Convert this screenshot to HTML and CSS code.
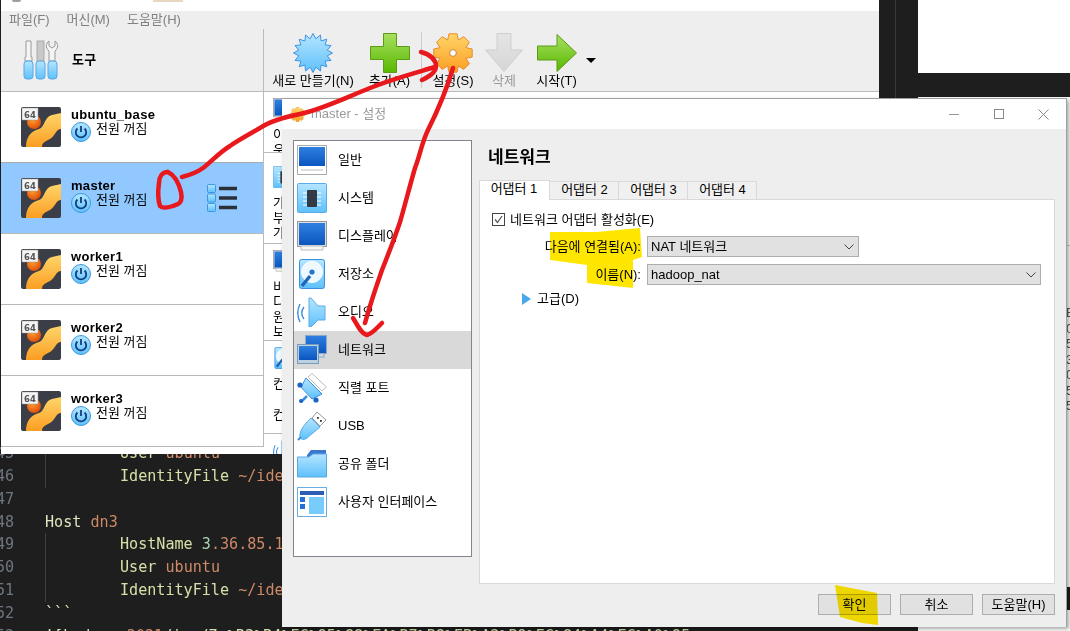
FILE: index.html

```html
<!DOCTYPE html>
<html lang="ko">
<head>
  <meta charset="UTF-8" />
  <title>master - 설정</title>
  <link rel="stylesheet" href="styles.css">
</head>
<body>
  <svg class="defs" width="0" height="0">
    <defs>
      <linearGradient id="gBlue" x1="0" y1="0" x2="0" y2="1"><stop offset="0" stop-color="#2f80e0"/><stop offset="1" stop-color="#0a55c0"/></linearGradient>
      <linearGradient id="gSky" x1="0" y1="0" x2="0" y2="1"><stop offset="0" stop-color="#b5e6ff"/><stop offset="1" stop-color="#5fc0fb"/></linearGradient>
      <linearGradient id="gGreen" x1="0" y1="0" x2="0" y2="1"><stop offset="0" stop-color="#a8e060"/><stop offset="1" stop-color="#58b800"/></linearGradient>
      <linearGradient id="gOrange" x1="0" y1="0" x2="0" y2="1"><stop offset="0" stop-color="#ffd56a"/><stop offset="1" stop-color="#fb9e22"/></linearGradient>
      <linearGradient id="gGray" x1="0" y1="0" x2="0" y2="1"><stop offset="0" stop-color="#e4e4e4"/><stop offset="1" stop-color="#d6d6d6"/></linearGradient>
      <radialGradient id="gBall" cx=".4" cy=".35" r=".7"><stop offset="0" stop-color="#ffa030"/><stop offset="1" stop-color="#dc4a08"/></radialGradient>

      <symbol id="i-vm" viewBox="0 0 40 40">
        <rect width="40" height="40" rx="2" fill="#3b3e46"/>
        <path d="M5 40C5 30 10 24 18 22C24 20 23 10 31 8L40 6V22C35 22 35 28 29 32C23 35 21 36 21 40Z" fill="url(#gOrange)"/>
        <circle cx="13" cy="15" r="7" fill="url(#gBall)"/>
        <rect x="1" y="1" width="16" height="12" fill="#f4f4f4" stroke="#999" stroke-width=".5"/>
        <text x="9" y="10.5" text-anchor="middle" font-family="DejaVu Sans" font-size="8.5" font-weight="bold" fill="#555">64</text>
      </symbol>
      <symbol id="i-power" viewBox="0 0 20 20">
        <circle cx="10" cy="10" r="9.5" fill="url(#gSky)" stroke="#3b98dc"/>
        <path d="M6.4 6.5A5.2 5.2 0 1 0 13.6 6.5" fill="none" stroke="#0f3f80" stroke-width="1.8"/>
        <path d="M10 4V10" stroke="#0f3f80" stroke-width="1.8"/>
      </symbol>
      <symbol id="i-tools" viewBox="0 0 36 40">
        <path d="M3 1H8V17H9V21H2V17H3Z" fill="#f4f4f4" stroke="#999"/>
        <rect x="14" y="1" width="7" height="20" fill="#c8c8c8" stroke="#aaa"/>
        <path d="M26 1V6L29 8L32 6V1C35 3 36 8 32 11V21H26V11C22 8 23 3 26 1Z" fill="#f4f4f4" stroke="#999"/>
        <rect x="1" y="21" width="9" height="18" rx="3" fill="url(#gSky)" stroke="#56a8e6"/>
        <rect x="13" y="21" width="9" height="18" rx="3" fill="url(#gSky)" stroke="#56a8e6"/>
        <rect x="25" y="21" width="9" height="18" rx="3" fill="url(#gSky)" stroke="#56a8e6"/>
      </symbol>
      <symbol id="i-list" viewBox="0 0 30 28">
        <rect x=".5" y=".5" width="8" height="8" rx="1" fill="url(#gSky)" stroke="#3b98dc"/>
        <rect x=".5" y="10" width="8" height="8" rx="1" fill="url(#gSky)" stroke="#3b98dc"/>
        <rect x=".5" y="19.5" width="8" height="8" rx="1" fill="url(#gSky)" stroke="#3b98dc"/>
        <path d="M12 4.5H30M12 14H30M12 23.5H30" stroke="#2b3038" stroke-width="3.4"/>
      </symbol>
      <symbol id="i-new" viewBox="0 0 40 40">
        <polygon points="20,.5 22.83,5.78 27.46,1.98 28.06,7.94 33.79,6.21 32.06,11.94 38.02,12.54 34.22,17.17 39.5,20 34.22,22.83 38.02,27.46 32.06,28.06 33.79,33.79 28.06,32.06 27.46,38.02 22.83,34.22 20,39.5 17.17,34.22 12.54,38.02 11.94,32.06 6.21,33.79 7.94,28.06 1.98,27.46 5.78,22.83 .5,20 5.78,17.17 1.98,12.54 7.94,11.94 6.21,6.21 11.94,7.94 12.54,1.98 17.17,5.78" fill="url(#gSky)" stroke="#3f93e6"/>
      </symbol>
      <symbol id="i-add" viewBox="0 0 40 40">
        <path d="M13.5 .5H26.5V13.5H39.5V26.5H26.5V39.5H13.5V26.5H.5V13.5H13.5Z" fill="url(#gGreen)" stroke="#5c9a18"/>
      </symbol>
      <symbol id="i-gear" viewBox="0 0 40 40">
        <path d="M16 .8H24L25.36 7.07L30.75 3.6L36.4 9.25L32.93 14.64L39.2 16V24L32.93 25.36L36.4 30.75L30.75 36.4L25.36 32.93L24 39.2H16L14.64 32.93L9.25 36.4L3.6 30.75L7.07 25.36L.8 24V16L7.07 14.64L3.6 9.25L9.25 3.6L14.64 7.07Z" fill="url(#gOrange)" stroke="#e88a28"/>
        <circle cx="20" cy="20" r="3.4" fill="#fff" stroke="#c9822c"/>
      </symbol>
      <symbol id="i-del" viewBox="0 0 40 40">
        <path d="M13 .5H27V17H38.5L20 38.5L1.5 17H13Z" fill="url(#gGray)" stroke="#cfcfcf"/>
      </symbol>
      <symbol id="i-start" viewBox="0 0 40 40">
        <path d="M.5 13H20V1.5L39.5 20L20 38.5V27H.5Z" fill="url(#gGreen)" stroke="#5c9a18"/>
      </symbol>

      <symbol id="s-general" viewBox="0 0 30 30">
        <rect x=".5" y=".5" width="29" height="29" fill="#fff" stroke="#aaa"/>
        <rect x="2" y="2" width="26" height="19" fill="url(#gBlue)"/>
        <path d="M4 25H26" stroke="#bbb"/>
      </symbol>
      <symbol id="s-system" viewBox="0 0 30 30">
        <rect x=".5" y=".5" width="29" height="29" rx="1" fill="url(#gSky)" stroke="#58ace8"/>
        <path d="M6 10H24M6 14H24M6 18H24M6 22H24" stroke="#fff"/>
        <rect x="10" y="7" width="10" height="17" rx="1" fill="#333a46"/>
      </symbol>
      <symbol id="s-display" viewBox="0 0 30 30">
        <rect x=".5" y=".5" width="29" height="25" fill="#ddd" stroke="#999"/>
        <rect x="2" y="2" width="26" height="22" fill="url(#gBlue)"/>
        <path d="M4 25H26V29H4Z" fill="#f5f5f5" stroke="#bbb"/>
      </symbol>
      <symbol id="s-storage" viewBox="0 0 30 30">
        <rect x="2.5" y=".5" width="25" height="29" rx="2" fill="url(#gSky)" stroke="#3b8edc"/>
        <circle cx="15" cy="13" r="10.5" fill="#eef8ff" stroke="#fff"/>
        <circle cx="15" cy="13" r="2.6" fill="#2474cc"/>
        <path d="M5 27L13 17" stroke="#1f66b8" stroke-width="3.4"/>
      </symbol>
      <symbol id="s-audio" viewBox="0 0 30 30">
        <path d="M14 1L21 9H28V23H21L14 30H12V1Z" fill="url(#gSky)" stroke="#58ace8"/>
        <path d="M7 10C4 14 4 18 7 22M3 7C0 13 0 19 3 25" fill="none" stroke="#3b8edc" stroke-width="1.4"/>
      </symbol>
      <symbol id="s-network" viewBox="0 0 30 30">
        <rect x="8.5" y=".5" width="21" height="18" fill="url(#gBlue)" stroke="#8fa9c4"/>
        <path d="M27 19V22H20" fill="none" stroke="#a8c0d8" stroke-width="2"/>
        <rect x=".5" y="9.5" width="21" height="19" fill="#bcd0e4" stroke="#7a9ab8"/>
        <rect x="2" y="11" width="18" height="14" fill="url(#gBlue)"/>
      </symbol>
      <symbol id="s-serial" viewBox="0 0 30 30">
        <path d="M15 .5L29.5 14L25 18L11 4Z" fill="#fff" stroke="#bbb"/>
        <path d="M9 5L25 21L15 26L4 14Z" fill="url(#gSky)" stroke="#3b8edc"/>
        <path d="M10 23L4 29" stroke="#3b8edc" stroke-width="2.5"/>
        <circle cx="3" cy="12" r="2.6" fill="#1a66c8"/>
        <circle cx="19" cy="27" r="2.6" fill="#1a66c8"/>
        <circle cx="4" cy="28" r="2" fill="#1a66c8"/>
      </symbol>
      <symbol id="s-usb" viewBox="0 0 30 30">
        <path d="M20 1L29 9L23 15L15 7Z" fill="#fff" stroke="#999"/>
        <rect x="20" y="6" width="1.8" height="1.8" fill="#333"/>
        <rect x="23" y="9" width="1.8" height="1.8" fill="#333"/>
        <path d="M14 7L23 16L10 27C6 30 2 28 3 23C4 17 9 12 14 7Z" fill="url(#gSky)" stroke="#58ace8"/>
        <path d="M4 26L1 29" stroke="#3b8edc" stroke-width="2"/>
      </symbol>
      <symbol id="s-folder" viewBox="0 0 30 30">
        <path d="M10 6L14 1H29V8H10Z" fill="#3a78d0"/>
        <path d="M.5 8H12L16 5H29.5V28H.5Z" fill="url(#gSky)" stroke="#5aa8e4"/>
      </symbol>
      <symbol id="s-ui" viewBox="0 0 30 30">
        <rect x=".5" y=".5" width="29" height="29" fill="#ffffff" stroke="#6aaee8"/>
        <rect x="3" y="4" width="24" height="4" fill="#2c5fb4"/>
        <rect x="3" y="10" width="5" height="5" fill="#2470d8"/>
        <rect x="3" y="17" width="5" height="5" fill="#2470d8"/>
        <rect x="12" y="10" width="15" height="17" fill="#78ccfc"/>
      </symbol>
    </defs>
  </svg>

  <!-- editor behind the windows -->
  <div class="editor">
    <div class="line"><span class="num">45</span><span class="tab"></span><span class="kw">User</span> <span class="val">ubuntu</span></div>
    <div class="line"><span class="num">46</span><span class="tab"></span><span class="kw">IdentityFile</span> <span class="val">~/ide</span></div>
    <div class="line"><span class="num">47</span></div>
    <div class="line"><span class="num">48</span><span class="kw host">Host</span> <span class="val">dn3</span></div>
    <div class="line"><span class="num">49</span><span class="tab"></span><span class="kw">HostName</span> <span class="ip">3</span><span class="val">.36.85.1</span></div>
    <div class="line"><span class="num">50</span><span class="tab"></span><span class="kw">User</span> <span class="val">ubuntu</span></div>
    <div class="line"><span class="num">51</span><span class="tab"></span><span class="kw">IdentityFile</span> <span class="val">~/ide</span></div>
    <div class="line"><span class="num">52</span><span class="kw host">```</span></div>
    <div class="line"><span class="num">53</span><span class="kw host">![hadoop</span> <span class="val">2021</span><span class="kw">/img/7-%B3%B4%EC%95%88%EA%B7%B8%EB%A3%B9%EC%84%A4%EC%A0%95</span></div>
  </div>
  <div class="editor-rule"></div>
  <div class="white-top"></div>
  <div class="white-side">
    <span class="side-line"></span>
    <div class="side-nums">E<br>0<br>5<br>3<br>0<br>5<br>5</div>
    <span class="side-bar"></span>
  </div>

  <!-- main window -->
  <div class="vbox">
    <div class="vbox-title"><i class="bit-icon"></i><i class="bit-gear"></i></div>
    <div class="menu">
      <span>파일(F)</span><span>머신(M)</span><span>도움말(H)</span>
    </div>
    <div class="vbox-body">
      <div class="side">
        <div class="tools-row">
          <svg class="tools-icon"><use href="#i-tools"/></svg>
          <b>도구</b>
        </div>
        <div class="vm">
          <svg class="vm-icon"><use href="#i-vm"/></svg>
          <div class="vm-text"><b>ubuntu_base</b><div class="vm-state"><svg class="power"><use href="#i-power"/></svg>전원 꺼짐</div></div>
        </div>
        <div class="vm selected">
          <svg class="vm-icon"><use href="#i-vm"/></svg>
          <div class="vm-text"><b>master</b><div class="vm-state"><svg class="power"><use href="#i-power"/></svg>전원 꺼짐</div></div>
          <svg class="vm-list"><use href="#i-list"/></svg>
        </div>
        <div class="vm">
          <svg class="vm-icon"><use href="#i-vm"/></svg>
          <div class="vm-text"><b>worker1</b><div class="vm-state"><svg class="power"><use href="#i-power"/></svg>전원 꺼짐</div></div>
        </div>
        <div class="vm">
          <svg class="vm-icon"><use href="#i-vm"/></svg>
          <div class="vm-text"><b>worker2</b><div class="vm-state"><svg class="power"><use href="#i-power"/></svg>전원 꺼짐</div></div>
        </div>
        <div class="vm">
          <svg class="vm-icon"><use href="#i-vm"/></svg>
          <div class="vm-text"><b>worker3</b><div class="vm-state"><svg class="power"><use href="#i-power"/></svg>전원 꺼짐</div></div>
        </div>
      </div>
      <div class="pane">
        <div class="toolbar">
          <div class="tool t-new"><svg><use href="#i-new"/></svg><span>새로 만들기(N)</span></div>
          <div class="tool t-add"><svg><use href="#i-add"/></svg><span>추가(A)</span></div>
          <div class="tool-sep"></div>
          <div class="tool t-gear"><svg><use href="#i-gear"/></svg><span>설정(S)</span></div>
          <div class="tool t-del"><svg><use href="#i-del"/></svg><span class="off">삭제</span></div>
          <div class="tool t-start"><svg><use href="#i-start"/></svg><span>시작(T)</span></div>
          <div class="caret"></div>
        </div>
        <div class="details">
          <div class="sect s1"><svg><use href="#s-display"/></svg><p>이</p><p>운</p></div>
          <div class="sect s2"><svg><use href="#s-system"/></svg><p>가</p><p>부</p><p>가</p></div>
          <div class="sect s3"><svg><use href="#s-display"/></svg><p>비</p><p>디</p><p>원</p><p>보</p></div>
          <div class="sect s4"><svg><use href="#s-storage"/></svg><p>컨</p><p class="gap">컨</p></div>
          <div class="sect s5"><svg><use href="#s-audio"/></svg></div>
        </div>
      </div>
    </div>
  </div>

  <!-- settings dialog -->
  <div class="dialog">
    <div class="dlg-title">
      <svg class="dlg-gear"><use href="#i-gear"/></svg>
      <span class="dlg-name">master - 설정</span>
      <span class="win-btn"><i class="min"></i></span>
      <span class="win-btn"><i class="max"></i></span>
      <span class="win-btn">
        <svg class="close" viewBox="0 0 11 11"><path d="M.5 .5L10.5 10.5M10.5 .5L.5 10.5" stroke="#888" fill="none"/></svg>
      </span>
    </div>
    <div class="dlg-body">
      <div class="dlg-main">
        <ul class="cats">
          <li><svg><use href="#s-general"/></svg>일반</li>
          <li><svg><use href="#s-system"/></svg>시스템</li>
          <li><svg><use href="#s-display"/></svg>디스플레이</li>
          <li><svg><use href="#s-storage"/></svg>저장소</li>
          <li><svg><use href="#s-audio"/></svg>오디오</li>
          <li class="active"><svg><use href="#s-network"/></svg>네트워크</li>
          <li><svg><use href="#s-serial"/></svg>직렬 포트</li>
          <li><svg><use href="#s-usb"/></svg>USB</li>
          <li><svg><use href="#s-folder"/></svg>공유 폴더</li>
          <li><svg><use href="#s-ui"/></svg>사용자 인터페이스</li>
        </ul>
        <div class="page">
          <h2>네트워크</h2>
          <div class="tabs">
            <span class="tab-item on">어댑터 1</span>
            <span class="tab-item">어댑터 2</span>
            <span class="tab-item">어댑터 3</span>
            <span class="tab-item">어댑터 4</span>
          </div>
          <div class="tab-panel">
            <div class="check-row">
              <svg class="check" viewBox="0 0 13 13"><rect x=".5" y=".5" width="12" height="12" fill="#fff" stroke="#444"/><path d="M3 6.5L5.5 9.5L10 3" fill="none" stroke="#555" stroke-width="1.2"/></svg>
              네트워크 어댑터 활성화(E)
            </div>
            <div class="form-row">
              <label>다음에 연결됨(A):</label>
              <div class="select short">NAT 네트워크<svg class="chev" viewBox="0 0 10 6"><path d="M.5 .5L5 5L9.5 .5" fill="none" stroke="#444"/></svg></div>
            </div>
            <div class="form-row">
              <label>이름(N):</label>
              <div class="select long">hadoop_nat<svg class="chev" viewBox="0 0 10 6"><path d="M.5 .5L5 5L9.5 .5" fill="none" stroke="#444"/></svg></div>
            </div>
            <div class="adv"><i class="adv-arrow"></i>고급(D)</div>
          </div>
        </div>
      </div>
      <div class="dlg-btns">
        <button>확인</button>
        <button>취소</button>
        <button>도움말(H)</button>
      </div>
    </div>
  </div>

  <!-- marker scribbles drawn on the screenshot -->
  <svg class="ink hl" viewBox="0 0 1070 631">
    <path d="M550 232L596 232L640 228L642 257L633 260L633 288L587 283L587 265L550 260Z" fill="#ffe600"/>
    <path d="M835 585L877 593L878 625L862 623L840 617Z" fill="#ffe600"/>
  </svg>
  <svg class="ink" viewBox="0 0 1070 631">
    <g fill="none" stroke="#e8181c" stroke-width="4.5" stroke-linecap="round" stroke-linejoin="round">
      <path d="M168 172C162 172 159 177 159 183C158 190 158 200 160 206C163 209 171 207 178 204C182 202 182 197 181 192C179 184 176 176 168 172"/>
      <path d="M182 177C190 175 196 173 203 168C213 160 220 152 230 146C240 139 250 134 260 128C270 121 285 117 300 114C320 110 345 98 370 88C392 79 415 73 435 67"/>
      <path d="M421 52C430 54 436 60 436 66C436 73 428 77 422 80"/>
      <path d="M453 68C448 85 438 110 428 130C422 142 420 155 415 168C410 185 405 205 400 222C394 240 388 255 382 270C375 290 370 305 365 323"/>
      <path d="M353 318C357 324 361 334 367 335C372 334 377 328 382 323"/>
    </g>
  </svg>
</body>
</html>
```

FILE: styles.css

```css
* {
  box-sizing: border-box;
}
html, body {
  margin: 0;
  height: 100%;
}
body {
  position: relative;
  width: 1070px;
  height: 631px;
  overflow: hidden;
  background: #1e1e1e;
  font-family: "Liberation Sans", "Noto Sans CJK KR", sans-serif;
  font-size: 13px;
  line-height: 16px;
  color: #000;
}
svg {
  display: block;
  flex: none;
}
.defs {
  position: absolute;
}
b {
  letter-spacing: .3px;
}

/* editor */
.editor {
  position: absolute;
  left: 0;
  top: 442px;
  width: 700px;
  height: 189px;
  overflow: hidden;
  font-family: "DejaVu Sans Mono", monospace;
  font-size: 15.1px;
  line-height: 22.85px;
  color: #d7e0a8;
}
.line {
  height: 22.85px;
  white-space: pre;
}
.num {
  display: inline-block;
  width: 18px;
  margin-left: -4px;
  margin-right: 31px;
  color: #6e7681;
}
.tab {
  display: inline-block;
  width: 75px;
  height: 22.85px;
  vertical-align: top;
  border-left: 1px solid #404040;
}
.host {
  color: #dfe6bf;
}
.val {
  color: #ce8a68;
}
.ip {
  color: #a9d6b4;
}
.editor-rule {
  position: absolute;
  left: 895px;
  top: 0;
  width: 1px;
  height: 98px;
  background: #3a3a3a;
}
.white-top {
  position: absolute;
  left: 918px;
  top: 0;
  width: 152px;
  height: 73px;
  background: #fff;
}
.white-side {
  position: absolute;
  left: 918px;
  top: 97px;
  width: 152px;
  height: 534px;
  background: #fff;
  overflow: hidden;
}
.side-line {
  position: absolute;
  left: 0;
  top: 148px;
  width: 152px;
  height: 1px;
  background: #ccc;
}
.side-nums {
  position: absolute;
  left: 148px;
  top: 208px;
  color: #555;
  line-height: 15.5px;
}
.side-bar {
  position: absolute;
  right: 0;
  top: 490px;
  width: 3px;
  height: 23px;
  background: #1e1e1e;
}

/* main window */
.vbox {
  position: absolute;
  left: 1px;
  top: 0;
  width: 878px;
  height: 454px;
  background: #fff;
  display: flex;
  flex-direction: column;
}
.vbox-title {
  height: 11px;
  background: #fff;
  display: flex;
  align-items: flex-start;
  padding-left: 11px;
}
.bit-icon {
  width: 9px;
  height: 2px;
  background: #9aa0aa;
  border-radius: 0 0 4px 4px;
}
.bit-gear {
  width: 30px;
  height: 2px;
  margin-left: 132px;
  background: #e8d8c0;
}
.menu {
  height: 18px;
  background: #eee;
  color: #808080;
  display: flex;
  gap: 17px;
  padding-left: 8px;
  align-items: center;
}
.vbox-body {
  flex: 1;
  display: flex;
  min-height: 0;
}
.side {
  width: 263px;
  flex: none;
  border-right: 1px solid #bbb;
  background: #fff;
  border-bottom: 1px solid #aaa;
  height: 418px;
}
.tools-row {
  height: 63px;
  background: #eee;
  border-bottom: 1px solid #bbb;
  display: flex;
  align-items: center;
  padding-left: 22px;
}
.tools-icon {
  width: 36px;
  height: 40px;
  margin-right: 13px;
}
.vm {
  height: 71px;
  border-bottom: 1px solid #b8b8b8;
  display: flex;
  align-items: center;
  padding-left: 20px;
  position: relative;
}
.vm.selected {
  background: #90c8ff;
  border-top: 1px solid #aaa;
  margin-top: -1px;
  height: 72px;
}
.vm-icon {
  width: 40px;
  height: 40px;
  margin-right: 10px;
}
.vm-text {
  line-height: 15px;
  margin-top: -5px;
}
.vm-state {
  display: flex;
  align-items: flex-start;
  line-height: 13px;
  height: 20px;
}
.power {
  width: 20px;
  height: 20px;
  margin-right: 5px;
}
.vm-list {
  position: absolute;
  left: 206px;
  top: 21px;
  width: 30px;
  height: 28px;
}
.pane {
  flex: 1;
  min-width: 0;
}
.toolbar {
  height: 63px;
  background: #eee;
  border-bottom: 1px solid #bbb;
  display: flex;
  padding-top: 4px;
  position: relative;
}
.tool {
  display: flex;
  flex-direction: column;
  align-items: center;
  white-space: nowrap;
  line-height: 16px;
}
.tool svg {
  width: 40px;
  height: 40px;
}
.tool .off {
  color: #9a9a9a;
}
.t-new { margin-left: 8px; width: 82px; }
.t-add { margin-left: 15px; width: 41px; }
.tool-sep {
  width: 1px;
  height: 56px;
  margin: -1px 11px 0 11px;
  background: #ccc;
}
.t-gear { width: 40px; }
.t-del { width: 40px; margin-left: 11px; }
.t-start { width: 41px; margin-left: 12px; }
.caret {
  width: 0;
  height: 0;
  margin: 25px 0 0 9px;
  border-left: 5px solid transparent;
  border-right: 5px solid transparent;
  border-top: 5px solid #000;
}
.details {
  background: #fff;
}
.sect {
  border-bottom: 1px solid #bbb;
  padding-left: 9px;
  overflow: hidden;
}
.sect svg {
  width: 22px;
  height: 22px;
  margin-bottom: 7px;
}
.sect p {
  margin: 0;
  line-height: 15px;
}
.sect .gap {
  margin-top: 16px;
}
.s1 { height: 61px; padding-top: 6px; }
.s2 { height: 91px; padding-top: 13px; }
.s3 { height: 97px; padding-top: 6px; }
.s4 { height: 93px; padding-top: 6px; }
.s5 { height: 20px; padding-top: 6px; border: 0; }

/* dialog */
.dialog {
  position: absolute;
  left: 282px;
  top: 98px;
  width: 785px;
  height: 529px;
  border: 1px solid #a0a0a0;
  border-width: 1px 1px 0 0;
  box-shadow: 2px 2px 4px rgba(0,0,0,0.35);
  background: #eee;
  display: flex;
  flex-direction: column;
}
.dlg-title {
  height: 30px;
  background: #fff;
  display: flex;
  align-items: center;
  padding-left: 8px;
  flex: none;
}
.dlg-gear {
  width: 15px;
  height: 15px;
  margin-right: 6px;
}
.dlg-name {
  color: #999;
  flex: 1;
}
.win-btn {
  width: 45px;
  display: flex;
  justify-content: center;
  align-items: center;
}
.min {
  width: 10px;
  height: 1px;
  background: #999;
}
.max {
  width: 10px;
  height: 10px;
  border: 1px solid #888;
}
.close {
  width: 11px;
  height: 11px;
}
.dlg-body {
  flex: 1;
  display: flex;
  flex-direction: column;
  min-height: 0;
  padding: 11px 11px 12px 11px;
}
.dlg-main {
  display: flex;
  flex: none;
  height: 454px;
}
.cats {
  width: 179px;
  height: 417px;
  margin: 0;
  padding: 0;
  list-style: none;
  background: #fff;
  border: 1px solid #84848e;
  flex: none;
}
.cats li {
  height: 38px;
  display: flex;
  align-items: center;
  padding-left: 3px;
}
.cats li svg {
  width: 30px;
  height: 30px;
  margin-right: 11px;
}
.cats .active {
  background: #d9d9d9;
}
.page {
  margin-left: 7px;
  flex: 1;
  min-width: 0;
  display: flex;
  flex-direction: column;
  width: 574px;
}
h2 {
  margin: 0;
  padding-left: 9px;
  font-size: 17px;
  font-weight: bold;
  line-height: 20px;
  height: 40px;
  padding-top: 8px;
}
.tabs {
  display: flex;
  height: 19px;
  position: relative;
  z-index: 1;
  align-items: flex-end;
}
.tab-item {
  width: 69px;
  height: 18px;
  padding-left: 1px;
  background: #f0f0f0;
  border: 1px solid #d9d9d9;
  border-left-width: 0;
  border-bottom: 0;
  text-align: center;
  line-height: 15px;
}
.tab-item.on {
  width: 71px;
  height: 20px;
  background: #fff;
  margin-bottom: -1px;
  border-left-width: 1px;
  padding: 0 1px 0 0;
  line-height: 16px;
}
.tab-panel {
  height: 385px;
  background: #fff;
  border: 1px solid #d9d9d9;
  padding: 12px 12px 0 12px;
}
.check-row {
  display: flex;
  align-items: center;
  height: 15px;
  white-space: nowrap;
}
.check {
  width: 13px;
  height: 13px;
  margin-right: 5px;
}
.form-row {
  display: flex;
  align-items: center;
  height: 21px;
  margin-top: 7px;
}
.check-row + .form-row {
  margin-top: 9px;
}
.form-row label {
  width: 149px;
  text-align: right;
  margin-right: 6px;
  white-space: nowrap;
}
.select {
  height: 21px;
  background: #e1e1e1;
  border: 1px solid #adadad;
  padding: 0 4px 0 3px;
  display: flex;
  align-items: center;
  justify-content: space-between;
  white-space: nowrap;
}
.select.short { width: 212px; }
.select.long { width: 394px; }
.chev {
  width: 10px;
  height: 6px;
}
.adv {
  display: flex;
  align-items: center;
  height: 14px;
  margin: 7px 0 0 30px;
}
.adv-arrow {
  width: 0;
  height: 0;
  border-left: 9px solid #49a8ea;
  border-top: 6px solid transparent;
  border-bottom: 6px solid transparent;
  margin-right: 6px;
}
.dlg-btns {
  display: flex;
  justify-content: flex-end;
  gap: 9px;
}
button {
  width: 73px;
  height: 21px;
  padding: 0;
  background: #e1e1e1;
  border: 1px solid #adadad;
  font: inherit;
  color: #000;
}

/* ink layers */
.ink {
  position: absolute;
  left: 0;
  top: 0;
  width: 1070px;
  height: 631px;
  pointer-events: none;
}
.hl {
  mix-blend-mode: multiply;
}
```
